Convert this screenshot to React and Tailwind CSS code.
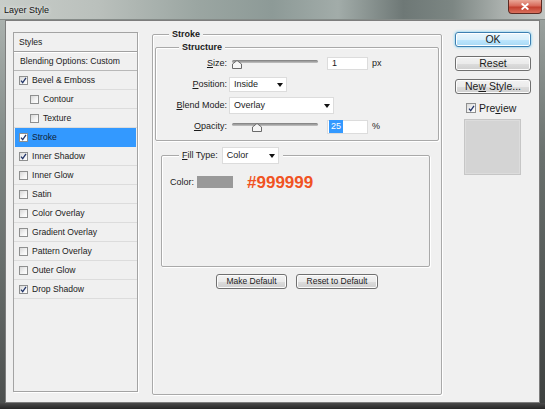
import React from "react";

const rows = [
  { label: "Bevel & Emboss", checked: true },
  { label: "Contour", indent: true },
  { label: "Texture", indent: true },
  { label: "Stroke", checked: true, selected: true },
  { label: "Inner Shadow", checked: true },
  { label: "Inner Glow" },
  { label: "Satin" },
  { label: "Color Overlay" },
  { label: "Gradient Overlay" },
  { label: "Pattern Overlay" },
  { label: "Outer Glow" },
  { label: "Drop Shadow", checked: true },
];

function Check({ checked, big, white }) {
  return (
    <span
      className={
        (big ? "w-[10px] h-[10px] " : "w-[9px] h-[9px] ") +
        (white
          ? "bg-white "
          : "bg-[linear-gradient(135deg,#d8d8d8_0%,#f4f4f4_60%,#ffffff_100%)] ") +
        "shrink-0 border border-[#8e8f8f] flex items-center justify-center"
      }
    >
      {checked && (
        <svg width="7" height="7" viewBox="0 0 7 7">
          <path d="M1 3.6 L2.7 5.6 L6 0.9" stroke="#23366a" strokeWidth="1.3" fill="none" />
        </svg>
      )}
    </span>
  );
}

function TitleBar() {
  return (
    <div className="h-[20px] flex items-start justify-between border-b border-[#858b88] bg-[linear-gradient(90deg,#c8cdc9_0%,#bac0bc_18%,#9ba6a2_36%,#8d9a97_50%,#a2aca9_62%,#6e7876_74%,#7c8683_83%,#aab0ad_92%,#c1c5c2_100%)]">
      <span className="ml-[4px] mt-[5px] text-[9px] leading-[11px] text-[#141414] [text-shadow:0_0_4px_#ffffff]">
        Layer Style
      </span>
      <div className="mr-[3px] w-[34px] h-[14px] rounded-b-[4px] border border-t-0 border-[#5b2a22] bg-[linear-gradient(180deg,#eaa898_0%,#d86a5a_45%,#c3402f_55%,#d9705c_100%)] flex items-center justify-center">
        <svg width="8" height="7" viewBox="0 0 8 7">
          <path d="M1.2 1 L6.8 6 M6.8 1 L1.2 6" stroke="#ffffff" strokeWidth="1.8" strokeLinecap="round" />
        </svg>
      </div>
    </div>
  );
}

function StylesPanel() {
  return (
    <div className="w-[125px] h-[360px] shrink-0 border border-[#a3a3a3] bg-[#f0f0f0] shadow-[1px_1px_0_#ffffff] flex flex-col text-[8.6px] leading-none">
      <div className="h-[19px] shrink-0 flex items-center pl-[5px] border-b border-[#a0a0a0] shadow-[0_1px_0_#ffffff]">
        Styles
      </div>
      <div className="h-[19px] shrink-0 flex items-center pl-[6px] border-b border-[#b8b8b8]">
        Blending Options: Custom
      </div>
      {rows.map((r) => (
        <div
          key={r.label}
          className={
            "h-[19px] shrink-0 flex items-center gap-[4px] border-b " +
            (r.selected
              ? "bg-[#3399ff] border-[#3399ff] mx-[1px] text-[#0f1e38] "
              : "border-[#dcdcdc] ") +
            (r.indent ? "pl-[16px]" : r.selected ? "pl-[4px]" : "pl-[5px]")
          }
        >
          <Check checked={r.checked} white={r.selected} />
          <span>{r.label}</span>
        </div>
      ))}
    </div>
  );
}

function Slider({ thumb }) {
  return (
    <div className="relative ml-[3px] w-[86px] h-[9px]">
      <div className="mt-[1px] h-[3px] rounded-full bg-[linear-gradient(180deg,#7c7c7c,#c4c4c4)]" />
      <svg className={"absolute top-[1px] " + thumb} width="10" height="9" viewBox="0 0 10 9">
        <path d="M0.5 8.5 V4 L5 0.5 L9.5 4 V8.5 Z" fill="#f6f6f6" stroke="#6a6a6a" />
      </svg>
    </div>
  );
}

function Arrow() {
  return (
    <svg width="6" height="4" viewBox="0 0 6 4">
      <path d="M0 0 H6 L3 4 Z" fill="#111111" />
    </svg>
  );
}

function Dropdown({ size, value }) {
  return (
    <div
      className={
        size +
        " bg-white border border-[#dcdcdc] flex items-center justify-between pl-[4px] pr-[3px] text-[9px] leading-none"
      }
    >
      <span>{value}</span>
      <Arrow />
    </div>
  );
}

function Row({ u, rest, children }) {
  return (
    <div className="h-[21px] flex items-center">
      <div className="w-[71px] text-right text-[9px] leading-none">
        <span className="underline underline-offset-[1px]">{u}</span>
        {rest}:
      </div>
      <div className="ml-[2px] flex items-center">{children}</div>
    </div>
  );
}

const groupBox =
  "relative border border-[#a9a9a9] rounded-[2px] shadow-[inset_1px_1px_0_#ffffff,1px_1px_0_#ffffff]";

const btn =
  "h-[15px] rounded-[3px] border border-[#707070] bg-[linear-gradient(180deg,#f2f2f2_0%,#ebebeb_50%,#dddddd_51%,#cfcfcf_100%)] shadow-[inset_0_0_0_1px_#fcfcfc] flex items-center justify-center leading-none text-[#1b1b1b]";

function StrokePanel() {
  return (
    <div className={groupBox + " mt-[2px] ml-[14px] w-[290px] h-[361px] shrink-0 flex flex-col"}>
      <span className="absolute left-[16px] top-[-7px] px-[3px] bg-[#f0f0f0] font-bold text-[9px] leading-[12px]">
        Stroke
      </span>

      <div className={groupBox + " ml-[2px] mt-[12px] w-[284px] h-[94px] pt-[5px]"}>
        <span className="absolute left-[23px] top-[-7px] px-[3px] bg-[#f0f0f0] font-bold text-[9px] leading-[12px]">
          Structure
        </span>
        <Row u="S" rest="ize">
          <Slider thumb="left-0" />
          <div className="ml-[9px] w-[41px] h-[13px] bg-white border border-[#dcdcdc] flex items-center pl-[4px] text-[9px] leading-none">
            1
          </div>
          <span className="ml-[4px] text-[9px] leading-none">px</span>
        </Row>
        <Row u="P" rest="osition">
          <Dropdown size="w-[58px] h-[15px]" value="Inside" />
        </Row>
        <Row u="B" rest="lend Mode">
          <Dropdown size="w-[105px] h-[17px]" value="Overlay" />
        </Row>
        <Row u="O" rest="pacity">
          <Slider thumb="left-[20px]" />
          <div className="ml-[9px] w-[41px] h-[14px] bg-white border border-[#dcdcdc] flex items-center pl-[1px] text-[9px] leading-none">
            <span className="bg-[#3399ff] text-white px-[2px] py-[2px]">25</span>
          </div>
          <span className="ml-[4px] text-[9px] leading-none">%</span>
        </Row>
      </div>

      <div className={groupBox + " ml-[8px] mt-[14px] w-[269px] h-[112px]"}>
        <div className="absolute left-[17px] top-[-9px] flex items-center bg-[#f0f0f0] pl-[3px] pr-[4px]">
          <span className="text-[9px] leading-none">
            <span className="underline underline-offset-[1px]">F</span>ill Type:
          </span>
          <div className="ml-[4px]">
            <Dropdown size="w-[57px] h-[17px]" value="Color" />
          </div>
        </div>
        <div className="mt-[16px] ml-[8px] h-[20px] flex items-center">
          <span className="text-[9px] leading-none">Color:</span>
          <div className="ml-[3px] w-[36px] h-[12px] bg-[#999999]" />
          <span className="ml-[14px] text-[17px] font-bold leading-none text-[#f05323]">#999999</span>
        </div>
      </div>

      <div className="mt-[7px] flex justify-center gap-[9px]">
        <div className={btn + " w-[71px] text-[8.5px]"}>Make Default</div>
        <div className={btn + " w-[82px] text-[8.5px]"}>Reset to Default</div>
      </div>
    </div>
  );
}

function RightColumn() {
  return (
    <div className="ml-[13px] w-[76px] shrink-0 flex flex-col">
      <div className="h-[15px] rounded-[3px] border border-[#3c7fb1] bg-[linear-gradient(180deg,#eaf6fd_0%,#d9f0fc_50%,#bee6fd_51%,#a7d9f5_100%)] shadow-[inset_0_0_0_1px_#ffffff,0_0_3px_#5ec8f5] flex items-center justify-center text-[10.5px] leading-none text-[#1b1b1b]">
        OK
      </div>
      <div className={btn + " mt-[9px] text-[10.5px]"}>Reset</div>
      <div className={btn + " mt-[8px] text-[10.5px]"}>
        <span>
          Ne<span className="underline underline-offset-[1px]">w</span> Style...
        </span>
      </div>
      <div className="mt-[7px] ml-[11px] h-[14px] flex items-center gap-[3px]">
        <Check checked big />
        <span className="text-[10.5px] leading-none">
          Pre<span className="underline underline-offset-[1px]">v</span>iew
        </span>
      </div>
      <div className="mt-[4px] ml-[9px] w-[57px] h-[56px] bg-[#d4d4d4] border border-[#c6c6c6] shadow-[inset_0_0_0_1px_#dcdcdc]" />
    </div>
  );
}

export default function App() {
  return (
    <div className="w-[545px] h-[409px] flex flex-col overflow-hidden bg-[#3a3a3a] text-[#1b1b1b] font-['Liberation_Sans',Arial,sans-serif]">
      <TitleBar />
      <div className="flex h-[383px]">
        <div className="w-[5px] bg-[linear-gradient(180deg,#aab1ae_0%,#7e8683_35%,#4c4f4e_100%)]" />
        <div className="w-[535px] bg-[#f0f0f0] border border-[#7d7d7d] flex items-start pt-[11px] pl-[7px]">
          <StylesPanel />
          <StrokePanel />
          <RightColumn />
        </div>
        <div className="w-[5px] bg-[linear-gradient(180deg,#9aa19e_0%,#6a716e_35%,#3e4140_100%)]" />
      </div>
      <div className="h-[6px] bg-[linear-gradient(180deg,#4a4a4a,#262626)]" />
    </div>
  );
}
